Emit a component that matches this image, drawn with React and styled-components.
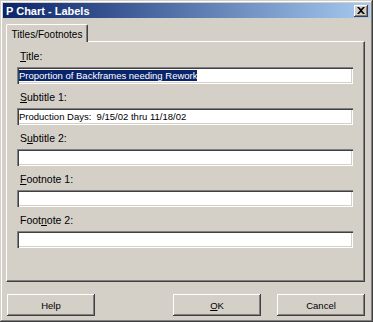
import React from 'react'
import styled, { createGlobalStyle } from 'styled-components'

const Global = createGlobalStyle`
  html, body {
    margin: 0;
    padding: 0;
    background: #d4d0c8;
  }
  body {
    font-family: Tahoma, "Liberation Sans", Arial, sans-serif;
    font-size: 9.5px;
    color: #000;
  }
`

const Window = styled.div`
  width: 373px;
  height: 322px;
  box-sizing: border-box;
  background: #d4d0c8;
  padding: 3px;
  display: flex;
  flex-direction: column;
  box-shadow: inset -1px -1px 0 #404040, inset 1px 1px 0 #d4d0c8,
    inset -2px -2px 0 #808080, inset 2px 2px 0 #fff;
`
const TitleBar = styled.div`
  height: 15px;
  display: flex;
  align-items: center;
  justify-content: space-between;
  padding: 0 2px 0 3px;
  background: linear-gradient(to right, #0a246a, #a6caf0);
  color: #fff;
  font-weight: bold;
  font-size: 11px;
`
const CloseButton = styled.div`
  width: 14px;
  height: 12px;
  background: #d4d0c8;
  display: flex;
  align-items: center;
  justify-content: center;
  box-shadow: inset -1px -1px 0 #404040, inset 1px 1px 0 #fff,
    inset -2px -2px 0 #808080;
`
const Body = styled.div`
  flex: 1;
  display: flex;
  flex-direction: column;
  padding: 6px 5px 0 3px;
`
const TabStrip = styled.div`
  display: flex;
  height: 17px;
  position: relative;
  z-index: 1;
`
const Tab = styled.div`
  width: 82px;
  height: 18px;
  box-sizing: border-box;
  background: #d4d0c8;
  display: flex;
  align-items: center;
  justify-content: center;
  padding-top: 1px;
  font-size: 10px;
  border-top: 1px solid #fff;
  border-left: 1px solid #fff;
  border-right: 1px solid #404040;
  box-shadow: inset -1px 0 0 #808080;
  border-radius: 2px 2px 0 0;
`
const Panel = styled.div`
  height: 241px;
  box-sizing: border-box;
  padding: 8px 10px 0 10px;
  display: flex;
  flex-direction: column;
  gap: 7px;
  border-top: 1px solid #fff;
  border-left: 1px solid #fff;
  border-right: 1px solid #404040;
  border-bottom: 1px solid #404040;
  box-shadow: inset -1px -1px 0 #808080;
`
const Group = styled.div`
  display: flex;
  flex-direction: column;
  gap: 4px;
`
const Label = styled.div`
  height: 13px;
  line-height: 13px;
  padding-left: 3px;
  font-size: 10.5px;
`
const Field = styled.div`
  height: 17px;
  width: 336px;
  box-sizing: border-box;
  background: #fff;
  padding: 2px 2px 0 2px;
  line-height: 13px;
  white-space: pre;
  box-shadow: inset 1px 1px 0 #808080, inset 2px 2px 0 #404040,
    inset -1px -1px 0 #fff, inset -2px -2px 0 #d4d0c8;
`
const Selected = styled.span`
  background: #0a246a;
  color: #fff;
`
const ButtonRow = styled.div`
  display: flex;
  padding: 12px 0 0 1px;
`
const Button = styled.div`
  width: 88px;
  height: 22px;
  box-sizing: border-box;
  display: flex;
  align-items: center;
  justify-content: center;
  margin-left: ${p => p.$gap || 0}px;
  background: #d4d0c8;
  box-shadow: inset -1px -1px 0 #404040, inset 1px 1px 0 #fff,
    inset -2px -2px 0 #808080;
`

const fields = [
  { label: <><u>T</u>itle:</>, value: <Selected>Proportion of Backframes needing Rework</Selected> },
  { label: <><u>S</u>ubtitle 1:</>, value: 'Production Days:  9/15/02 thru 11/18/02' },
  { label: <>S<u>u</u>btitle 2:</>, value: '' },
  { label: <><u>F</u>ootnote 1:</>, value: '' },
  { label: <>Foot<u>n</u>ote 2:</>, value: '' }
]

export default function App () {
  return (
    <Window>
      <Global />
      <TitleBar>
        <span>P Chart - Labels</span>
        <CloseButton>
          <svg width='8' height='7' viewBox='0 0 8 7'>
            <path d='M0 0h2l2 2 2-2h2L5 3.5 8 7H6L4 5 2 7H0l3-3.5z' fill='#000' />
          </svg>
        </CloseButton>
      </TitleBar>
      <Body>
        <TabStrip>
          <Tab>Titles/Footnotes</Tab>
        </TabStrip>
        <Panel>
          {fields.map((f, i) => (
            <Group key={i}>
              <Label>{f.label}</Label>
              <Field>{f.value}</Field>
            </Group>
          ))}
        </Panel>
        <ButtonRow>
          <Button>Help</Button>
          <Button $gap={78}><span><u>O</u>K</span></Button>
          <Button $gap={16}>Cancel</Button>
        </ButtonRow>
      </Body>
    </Window>
  )
}
